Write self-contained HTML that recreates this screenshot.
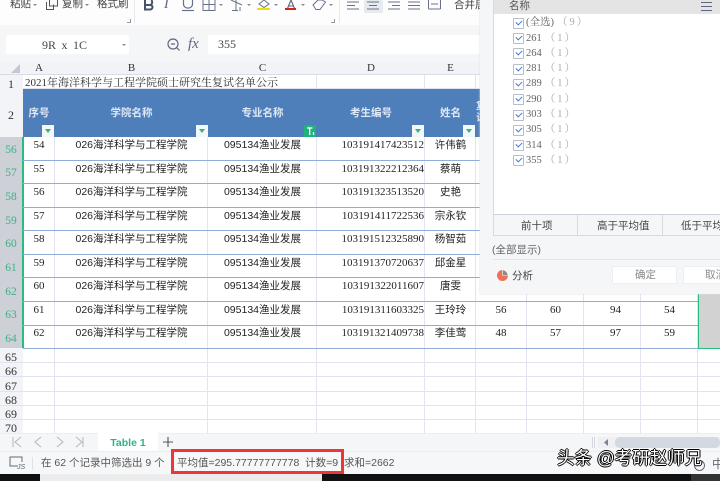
<!DOCTYPE html>
<html lang="zh"><head><meta charset="utf-8"><style>
html,body{margin:0;padding:0;background:#fff}
#p{position:relative;width:720px;height:481px;overflow:hidden;background:#fff;font-family:"Liberation Sans","Noto Sans CJK SC",sans-serif;color:#333}
#p div,#p span.a,#p svg{position:absolute}
.t{white-space:nowrap;line-height:14px;height:14px}
.c{text-align:center}
.s{font-family:"Liberation Serif","Noto Serif CJK SC",serif;font-size:11px;color:#222}
.d{font-size:10.5px;color:#222;text-align:center;white-space:nowrap;line-height:14px;height:14px;margin-top:1px}
.n{font-family:"Liberation Serif","Noto Sans CJK SC",serif;font-size:11px;color:#222;text-align:center;line-height:14px;height:14px;white-space:nowrap;margin-top:1px}
.id{text-align:right;padding-right:1px;box-sizing:border-box}
.h{background:#dfe3ee}
.r{background:#8fadd8;height:1px;left:23px;width:697px}
.g{background:#e1e4ee;height:1px;left:23px;width:697px}
.v{background:#e1e4ee;width:1px;top:75px;height:358px}
.rn{left:0;width:22px;text-align:center;font-family:"Liberation Serif",serif;font-size:12px;line-height:14px;height:14px;color:#333;margin-top:1px}
.rg{left:0;width:22px;text-align:center;font-family:"Liberation Serif",serif;font-size:11.5px;line-height:14px;height:14px;color:#3cb287;margin-top:1px}
.ch{font-family:"Liberation Serif",serif;font-size:11px;color:#333;text-align:center;top:61px;line-height:14px;height:14px}
.hd{color:#dfe8f5;font-size:10.5px;font-weight:bold;text-align:center;top:106px;line-height:14px;height:14px;white-space:nowrap}
.fb{width:12px;height:12px;top:125px;background:#f4f7f8}
.fb:after{content:"";position:absolute;left:3px;top:4px;border:3px solid transparent;border-top:4px solid #2fb481;border-bottom:0}
.cb{left:513px;width:9px;height:9px;border:1px solid #b9bdc6;border-radius:1px;background:#fff}
.cb:after{content:"";position:absolute;left:2px;top:1px;width:5px;height:3px;border-left:1.5px solid #3f74d2;border-bottom:1.5px solid #3f74d2;transform:rotate(-45deg)}
.l{left:526px;font-family:"Liberation Serif","Noto Serif CJK SC",serif;font-size:10.5px;color:#666;white-space:nowrap;line-height:14px;height:14px;margin-top:1px}
.q{color:#aaa;letter-spacing:2px;margin-left:3px}
.tb{font-size:10.5px;color:#444;white-space:nowrap;line-height:14px;height:14px}
.ar{width:0;height:0;border:2px solid transparent;border-top:2.5px solid #888;border-bottom:0}
</style></head><body><div id="p">

<!-- ribbon -->
<div style="left:0;top:0;width:720px;height:25px;background:#fdfdfe"></div>
<div style="left:0;top:25px;width:480px;height:37px;background:#f5f6f8"></div>
<div class="tb" style="left:10px;top:-3px;font-size:10.5px">粘贴</div>
<div class="ar" style="left:33px;top:4px"></div>
<svg style="left:45px;top:0" width="14" height="12" viewBox="0 0 14 12"><path d="M1.500 2v7.500h7V4.500M4.500 0v6h8V0" fill="none" stroke="#555" stroke-width="1"/></svg>
<div class="tb" style="left:62px;top:-3px">复制</div>
<div class="ar" style="left:85px;top:4px"></div>
<div class="tb" style="left:97px;top:-3px">格式刷</div>
<div style="left:134px;top:0;width:1px;height:23px;background:#e8e9ee"></div>
<div style="left:127px;top:19px;width:3px;height:3px;border-right:1px solid #999;border-bottom:1px solid #999"></div>
<svg style="left:142px;top:0" width="14" height="12" viewBox="0 0 14 12"><path d="M3 0v9.500h5c3 0 3.500-4 .5-4.500H3M8.500 5c2-1 2-3 1-5" fill="none" stroke="#46526a" stroke-width="2"/></svg>
<div style="left:164px;top:-2px;font:italic 14px 'Liberation Serif',serif;color:#59657c;line-height:14px">I</div>
<svg style="left:181px;top:0" width="14" height="12" viewBox="0 0 14 12"><path d="M2.500 0v4c0 5.500 9 5.500 9 0V0" fill="none" stroke="#67728a" stroke-width="1.200"/><path d="M1 10.500h12" stroke="#67728a" stroke-width="1.200"/></svg>
<svg style="left:202px;top:0" width="14" height="12" viewBox="0 0 14 12"><path d="M1 0v10.500h12V0M7 0v10.500M1 4.500h12" fill="none" stroke="#67728a" stroke-width="1"/></svg>
<div class="ar" style="left:219px;top:4px"></div>
<svg style="left:229px;top:0" width="15" height="12" viewBox="0 0 15 12"><path d="M2 0l11 5M7 0v10M3 10.500h6M11 7v4" fill="none" stroke="#67728a" stroke-width="1"/></svg>
<div class="ar" style="left:247px;top:4px"></div>
<svg style="left:257px;top:0" width="14" height="11" viewBox="0 0 14 11"><path d="M2 4l5-4 5 4-5 3.500z" fill="none" stroke="#67728a" stroke-width="1"/></svg>
<div style="left:257px;top:8px;width:13px;height:2px;background:#f0e000"></div>
<div class="ar" style="left:274px;top:4px"></div>
<svg style="left:285px;top:0" width="12" height="9" viewBox="0 0 12 9"><path d="M2.500 8.500L6 0l3.500 8.500M3.500 6h5" fill="none" stroke="#59657c" stroke-width="1.100"/></svg>
<div style="left:285px;top:8px;width:11px;height:2px;background:#e21b1b"></div>
<div class="ar" style="left:301px;top:4px"></div>
<svg style="left:312px;top:0" width="15" height="11" viewBox="0 0 15 11"><path d="M1 5l5-5h4l3.500 2L8 9.500H4z" fill="none" stroke="#67728a" stroke-width="1"/></svg>
<div class="ar" style="left:329px;top:4px"></div>
<div style="left:331px;top:19px;width:3px;height:3px;border-right:1px solid #999;border-bottom:1px solid #999"></div>
<div style="left:339px;top:0;width:1px;height:23px;background:#e8e9ee"></div>
<svg style="left:347px;top:0" width="12" height="11" viewBox="0 0 12 11"><path d="M0 2h12M0 5.500h8M0 9h12" stroke="#67728a"/></svg>
<div style="left:364px;top:0;width:19px;height:13px;background:#e7eaef;border-radius:2px"></div>
<svg style="left:367px;top:0" width="12" height="11" viewBox="0 0 12 11"><path d="M0 2h12M2 5.500h8M0 9h12" stroke="#67728a"/></svg>
<svg style="left:388px;top:0" width="12" height="11" viewBox="0 0 12 11"><path d="M0 2h12M4 5.500h8M0 9h12" stroke="#67728a"/></svg>
<svg style="left:408px;top:0" width="12" height="11" viewBox="0 0 12 11"><path d="M0 2h12M0 5.500h12M0 9h12" stroke="#67728a"/></svg>
<svg style="left:428px;top:0" width="13" height="10" viewBox="0 0 13 10"><path d="M.5 0v9M12.500 0v9M.5 9h12M3 4h7" fill="none" stroke="#67728a"/></svg>
<div class="tb" style="left:454px;top:-2px">合并居</div>

<!-- formula bar -->
<div style="left:6px;top:35px;width:123px;height:19px;background:#fff;border-radius:2px"></div>
<div style="left:42px;top:38px;font:12px/14px 'Liberation Serif',serif;color:#444;white-space:pre;word-spacing:2.500px">9R x 1C</div>
<div class="ar" style="left:122px;top:44px"></div>
<svg style="left:165px;top:36px" width="17" height="17" viewBox="0 0 17 17"><circle cx="8" cy="8" r="5" fill="none" stroke="#5d687f" stroke-width="1.200"/><path d="M6 8h4M11.500 11.500l3 3" stroke="#5d687f" stroke-width="1.200"/></svg>
<div style="left:188px;top:36px;font:italic 15px/16px 'Liberation Serif',serif;color:#5d687f">fx</div>
<div style="left:208px;top:35px;width:272px;height:19px;background:#fff"></div>
<div style="left:218px;top:37px;font:12px/14px 'Liberation Serif',serif;color:#444">355</div>

<!-- column header -->
<div style="left:0;top:62px;width:720px;height:13px;background:#f2f3f7"></div>
<div style="left:0;top:74px;width:720px;height:1px;background:#d8dce8"></div>
<svg style="left:11px;top:64px" width="9" height="9"><path d="M9 0v9H0z" fill="#c4c7cf"/></svg>
<div class="ch" style="left:23px;width:32px">A</div>
<div class="ch" style="left:55px;width:153px">B</div>
<div class="ch" style="left:208px;width:109px">C</div>
<div class="ch" style="left:317px;width:108px">D</div>
<div class="ch" style="left:425px;width:51px">E</div>

<!-- row header -->
<div style="left:0;top:75px;width:23px;height:358px;background:#f3f4f7"></div>
<div style="left:0;top:137px;width:22px;height:211px;background:#cdd0d6"></div>
<div style="left:22px;top:137px;width:1.500px;height:211px;background:#28bc80"></div>

<!-- grid -->
<div class="v" style="left:54px"></div><div class="v" style="left:207px"></div><div class="v" style="left:316px"></div><div class="v" style="left:424px"></div><div class="v" style="left:475px"></div><div class="v" style="left:526px"></div><div class="v" style="left:583px"></div><div class="v" style="left:640px"></div><div class="v" style="left:697px"></div>
<div class="g" style="top:88px"></div>
<div class="g" style="top:362px;left:0;width:720px"></div><div class="g" style="top:376px;left:0;width:720px"></div><div class="g" style="top:391px;left:0;width:720px"></div><div class="g" style="top:405px;left:0;width:720px"></div><div class="g" style="top:419px;left:0;width:720px"></div>

<!-- header row -->
<div style="left:23px;top:89px;width:697px;height:48px;background:#4f7fbb"></div>
<div class="hd" style="left:23px;width:32px">序号</div>
<div class="hd" style="left:55px;width:153px">学院名称</div>
<div class="hd" style="left:208px;width:109px">专业名称</div>
<div class="hd" style="left:317px;width:108px">考生编号</div>
<div class="hd" style="left:425px;width:51px">姓名</div>
<div class="fb" style="left:42px"></div><div class="fb" style="left:196px"></div>
<div style="left:304px;top:125px;width:12px;height:12px;background:#1fb27b"></div>
<svg style="left:306px;top:127px" width="9" height="9"><path d="M1 1h5.500M3.700 1v7M7.500 5v3" stroke="#fff" stroke-width="1.300" fill="none"/></svg>
<div class="fb" style="left:412px"></div><div class="fb" style="left:463px"></div>
<div class="hd" style="left:476px;width:10px;top:101px;overflow:hidden;line-height:12px;height:24px;white-space:normal;font-size:10px">复试</div>

<!-- data rows lines -->
<div class="r" style="top:160px"></div><div class="r" style="top:183px"></div><div class="r" style="top:207px"></div><div class="r" style="top:230px"></div><div class="r" style="top:254px"></div><div class="r" style="top:277px"></div><div class="r" style="top:301px"></div><div class="r" style="top:325px"></div><div class="r" style="top:348px;left:23px;width:697px"></div>

<!-- row numbers -->
<div class="rn" style="top:76px">1</div><div class="rn" style="top:107px">2</div>
<div class="rg" style="top:142px">56</div><div class="rg" style="top:165px">57</div><div class="rg" style="top:189px">58</div><div class="rg" style="top:213px">59</div><div class="rg" style="top:236px">60</div><div class="rg" style="top:260px">61</div><div class="rg" style="top:284px">62</div><div class="rg" style="top:307px">63</div><div class="rg" style="top:331px">64</div>
<div class="rn" style="top:349px">65</div><div class="rn" style="top:363px">66</div><div class="rn" style="top:378px">67</div><div class="rn" style="top:392px">68</div><div class="rn" style="top:406px">69</div><div class="rn" style="top:420px">70</div>

<!-- title -->
<div class="s t" style="left:25px;top:76px;color:#333">2021年海洋科学与工程学院硕士研究生复试名单公示</div>

<!-- rows -->
<div class="n" style="left:23px;width:32px;top:137px">54</div><div class="d" style="left:55px;width:153px;top:137px">026海洋科学与工程学院</div><div class="d" style="left:208px;width:109px;top:137px">095134渔业发展</div><div class="n id" style="left:317px;width:108px;top:137px">103191417423512</div><div class="d" style="left:425px;width:51px;top:137px">许伟鹤</div>
<div class="n" style="left:23px;width:32px;top:161px">55</div><div class="d" style="left:55px;width:153px;top:161px">026海洋科学与工程学院</div><div class="d" style="left:208px;width:109px;top:161px">095134渔业发展</div><div class="n id" style="left:317px;width:108px;top:161px">103191322212364</div><div class="d" style="left:425px;width:51px;top:161px">蔡萌</div>
<div class="n" style="left:23px;width:32px;top:184px">56</div><div class="d" style="left:55px;width:153px;top:184px">026海洋科学与工程学院</div><div class="d" style="left:208px;width:109px;top:184px">095134渔业发展</div><div class="n id" style="left:317px;width:108px;top:184px">103191323513520</div><div class="d" style="left:425px;width:51px;top:184px">史艳</div>
<div class="n" style="left:23px;width:32px;top:208px">57</div><div class="d" style="left:55px;width:153px;top:208px">026海洋科学与工程学院</div><div class="d" style="left:208px;width:109px;top:208px">095134渔业发展</div><div class="n id" style="left:317px;width:108px;top:208px">103191411722536</div><div class="d" style="left:425px;width:51px;top:208px">宗永钦</div>
<div class="n" style="left:23px;width:32px;top:231px">58</div><div class="d" style="left:55px;width:153px;top:231px">026海洋科学与工程学院</div><div class="d" style="left:208px;width:109px;top:231px">095134渔业发展</div><div class="n id" style="left:317px;width:108px;top:231px">103191512325890</div><div class="d" style="left:425px;width:51px;top:231px">杨智茹</div>
<div class="n" style="left:23px;width:32px;top:255px">59</div><div class="d" style="left:55px;width:153px;top:255px">026海洋科学与工程学院</div><div class="d" style="left:208px;width:109px;top:255px">095134渔业发展</div><div class="n id" style="left:317px;width:108px;top:255px">103191370720637</div><div class="d" style="left:425px;width:51px;top:255px">邱金星</div>
<div class="n" style="left:23px;width:32px;top:278px">60</div><div class="d" style="left:55px;width:153px;top:278px">026海洋科学与工程学院</div><div class="d" style="left:208px;width:109px;top:278px">095134渔业发展</div><div class="n id" style="left:317px;width:108px;top:278px">103191322011607</div><div class="d" style="left:425px;width:51px;top:278px">唐雯</div>
<div class="n" style="left:23px;width:32px;top:302px">61</div><div class="d" style="left:55px;width:153px;top:302px">026海洋科学与工程学院</div><div class="d" style="left:208px;width:109px;top:302px">095134渔业发展</div><div class="n id" style="left:317px;width:108px;top:302px">103191311603325</div><div class="d" style="left:425px;width:51px;top:302px">王玲玲</div>
<div class="n" style="left:476px;width:50px;top:302px">56</div><div class="n" style="left:527px;width:57px;top:302px">60</div><div class="n" style="left:587px;width:57px;top:302px">94</div><div class="n" style="left:641px;width:57px;top:302px">54</div>
<div class="n" style="left:23px;width:32px;top:325px">62</div><div class="d" style="left:55px;width:153px;top:325px">026海洋科学与工程学院</div><div class="d" style="left:208px;width:109px;top:325px">095134渔业发展</div><div class="n id" style="left:317px;width:108px;top:325px">103191321409738</div><div class="d" style="left:425px;width:51px;top:325px">李佳莺</div>
<div class="n" style="left:476px;width:50px;top:325px">48</div><div class="n" style="left:527px;width:57px;top:325px">57</div><div class="n" style="left:587px;width:57px;top:325px">97</div><div class="n" style="left:641px;width:57px;top:325px">59</div>

<!-- selected column -->
<div style="left:698px;top:294px;width:22px;height:55px;background:#d2d2d2;border-left:1.500px solid #28bc80;border-bottom:1.500px solid #28bc80;box-sizing:border-box"></div>

<!-- dialog -->
<div style="left:480px;top:0;width:240px;height:294px;background:#f5f6f8;box-shadow:0 0 2px #ddd"></div>
<div style="left:493px;top:0;width:227px;height:214px;background:#fff;border-left:1px solid #d7dae2;box-sizing:border-box"></div>
<div style="left:494px;top:0;width:226px;height:14px;background:#e4e4e4"></div>
<div class="tb" style="left:509px;top:-1px;color:#555">名称</div>
<svg style="left:701px;top:1px" width="12" height="11"><path d="M0 1.500h11M0 5.500h11M0 9.500h11" stroke="#5d687f"/></svg>
<div class="cb" style="top:18px"></div><div class="l" style="top:15px">(全选)<span class="q">（9）</span></div>
<div class="cb" style="top:33px"></div><div class="l" style="top:31px">261<span class="q">（1）</span></div>
<div class="cb" style="top:48px"></div><div class="l" style="top:46px">264<span class="q">（1）</span></div>
<div class="cb" style="top:64px"></div><div class="l" style="top:61px">281<span class="q">（1）</span></div>
<div class="cb" style="top:79px"></div><div class="l" style="top:76px">289<span class="q">（1）</span></div>
<div class="cb" style="top:94px"></div><div class="l" style="top:92px">290<span class="q">（1）</span></div>
<div class="cb" style="top:110px"></div><div class="l" style="top:107px">303<span class="q">（1）</span></div>
<div class="cb" style="top:125px"></div><div class="l" style="top:122px">305<span class="q">（1）</span></div>
<div class="cb" style="top:140px"></div><div class="l" style="top:138px">314<span class="q">（1）</span></div>
<div class="cb" style="top:155px"></div><div class="l" style="top:153px">355<span class="q">（1）</span></div>
<div style="left:493px;top:214px;width:227px;height:1px;background:#cdd1da"></div>
<div style="left:493px;top:235px;width:227px;height:1px;background:#d7dae2"></div>
<div style="left:577px;top:215px;width:1px;height:20px;background:#d7dae2"></div>
<div style="left:662px;top:215px;width:1px;height:20px;background:#d7dae2"></div>
<div style="left:493px;top:215px;width:1px;height:20px;background:#d7dae2"></div>
<div class="tb" style="left:521px;top:219px">前十项</div>
<div class="tb" style="left:597px;top:219px">高于平均值</div>
<div class="tb" style="left:681px;top:219px">低于平均值</div>
<div class="tb" style="left:492px;top:243px;color:#666">(全部显示)</div>
<div style="left:493px;top:259px;width:227px;height:1px;background:#e4e6ea"></div>
<svg style="left:496px;top:269px" width="13" height="13" viewBox="0 0 13 13"><circle cx="6.500" cy="6.500" r="5.500" fill="#ef7155"/><path d="M6.500 1a5.500 5.500 0 0 1 5.500 5.500h-5.500z" fill="#8b8b8b" stroke="#f5f6f8" stroke-width=".6"/></svg>
<div class="tb" style="left:512px;top:269px;color:#444">分析</div>
<div style="left:612px;top:266px;width:65px;height:18px;background:#fff;border:1px solid #eceef2;border-radius:2px;box-sizing:border-box"></div>
<div class="tb" style="left:635px;top:268px;color:#888">确定</div>
<div style="left:683px;top:266px;width:40px;height:18px;background:#fff;border:1px solid #eceef2;border-radius:2px;box-sizing:border-box"></div>
<div class="tb" style="left:705px;top:268px;color:#888">取消</div>

<!-- sheet tabs -->
<div style="left:0;top:433px;width:720px;height:18px;background:#f5f6f8;border-top:1px solid #eceef2;box-sizing:border-box"></div>
<svg style="left:12px;top:436px" width="74" height="12"><path d="M1 1v10M9 1L3 6l6 5M29 1L23 6l6 5M45 1l6 5-6 5M64 1l6 5-6 5M71 1v10" fill="none" stroke="#b3b6bf"/></svg>
<div style="left:98px;top:433px;width:60px;height:18px;background:#fff"></div>
<div style="left:98px;top:436px;width:60px;text-align:center;font-size:10.5px;font-weight:bold;color:#2fb481;line-height:14px">Table 1</div>
<svg style="left:162px;top:436px" width="12" height="12"><path d="M6 1v10M1 6h10" stroke="#555" stroke-width="1.100"/></svg>
<div style="left:592px;top:437px;width:1px;height:11px;background:#d4d8e0"></div>
<div style="left:594px;top:437px;width:1px;height:11px;background:#d4d8e0"></div>
<div style="left:598px;top:437px;width:122px;height:11px;background:#eef0f3"></div>
<svg style="left:604px;top:439px" width="5" height="7"><path d="M4 0v7L0 3.500z" fill="#7b8392"/></svg>
<div style="left:615px;top:437px;width:105px;height:11px;background:#d4d8e0;border-radius:5px"></div>

<!-- status bar -->
<div style="left:0;top:451px;width:720px;height:23px;background:#f6f7f9;border-top:1px solid #eceef2;box-sizing:border-box"></div>
<svg style="left:9px;top:456px" width="15" height="15"><path d="M9 10H1V1h12v5" fill="none" stroke="#5d687f"/></svg>
<div style="left:17px;top:464px;font:italic 7px/7px 'Liberation Sans',sans-serif;color:#5d687f">JS</div>
<div style="left:32px;top:457px;width:1px;height:13px;background:#e0e2e8"></div>
<div class="tb" style="left:41px;top:456px;font-size:10.5px;color:#555">在 62 个记录中筛选出 9 个</div>
<div style="left:171px;top:449px;width:173px;height:25px;border:3px solid #f03535;box-sizing:border-box"></div>
<div class="tb" style="left:177px;top:456px;font-size:10.5px;color:#555;white-space:pre">平均值=295.77777777778  计数=9</div>
<div class="tb" style="left:344px;top:456px;font-size:10.5px;color:#555">求和=2662</div>
<div class="tb" style="left:712px;top:457px;font-size:12px;color:#667">中</div>
<svg style="left:693px;top:459px" width="13" height="13"><circle cx="6.500" cy="6.500" r="5" fill="none" stroke="#667" /></svg>
<div class="tb" style="left:557px;top:449px;font-size:17.500px;line-height:18px;height:18px;color:#fff;text-shadow:0 0 1px #000,1px 0 0 #000,-1px 0 0 #000,0 1px 0 #000,0 -1px 0 #000">头条 @考研赵师兄</div>

<!-- bottom bar -->
<div style="left:0;top:474px;width:720px;height:7px;background:#111"></div>
<div style="left:40px;top:474px;width:282px;height:7px;background:#ececec"></div>
<div style="left:691px;top:474px;width:29px;height:7px;background:#333"></div>

</div></body></html>
